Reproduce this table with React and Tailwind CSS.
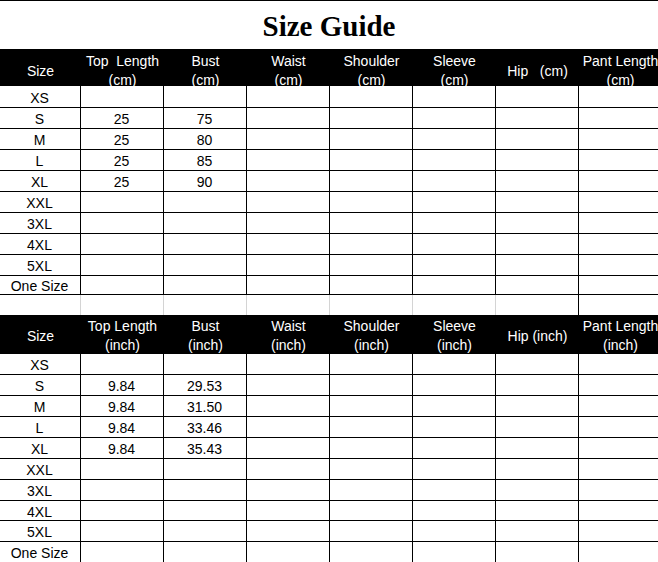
import React from "react";

const COLS = "grid grid-cols-[81px_83px_83px_83px_83px_83px_83px_83px]";

const sizes = ["XS", "S", "M", "L", "XL", "XXL", "3XL", "4XL", "5XL", "One Size"];

const cmData = {
  S: ["25", "75"],
  M: ["25", "80"],
  L: ["25", "85"],
  XL: ["25", "90"],
};
const inchData = {
  S: ["9.84", "29.53"],
  M: ["9.84", "31.50"],
  L: ["9.84", "33.46"],
  XL: ["9.84", "35.43"],
};

const cmHeights = ["h-[22px]", "h-[21px]", "h-[21px]", "h-[21px]", "h-[21px]", "h-[21px]", "h-[21px]", "h-[21px]", "h-[21px]", "h-[19px]"];
const inchHeights = ["h-[21px]", "h-[21px]", "h-[21px]", "h-[21px]", "h-[21px]", "h-[21px]", "h-[21px]", "h-[20px]", "h-[21px]", "h-[21px]"];

function Header({ height, pad, labels }) {
  return (
    <div className={`${COLS} ${height} bg-black text-white text-[14px] leading-[19px]`}>
      {labels.map((l, i) => (
        <div key={i} className={`flex flex-col items-center justify-center text-center whitespace-pre ${pad}`}>
          {l.map((t, j) => (
            <span key={j}>{t}</span>
          ))}
        </div>
      ))}
    </div>
  );
}

function Rows({ data, heights }) {
  return (
    <>
      {sizes.map((s, r) => {
        const d = data[s] || ["", ""];
        const cells = [s, d[0], d[1], "", "", "", "", ""];
        return (
          <div key={s} className={`${COLS} ${heights[r]} border-b border-black text-[14px]`}>
            {cells.map((c, i) => (
              <div key={i} className="flex items-center justify-center border-r border-black leading-none pt-[2px] pr-[1px]">
                {c}
              </div>
            ))}
          </div>
        );
      })}
    </>
  );
}

export default function App() {
  const cmLabels = [
    ["Size"],
    ["Top  Length", "(cm)"],
    ["Bust", "(cm)"],
    ["Waist", "(cm)"],
    ["Shoulder", "(cm)"],
    ["Sleeve", "(cm)"],
    ["Hip   (cm)"],
    ["Pant Length", "(cm)"],
  ];
  const inchLabels = [
    ["Size"],
    ["Top Length", "(inch)"],
    ["Bust", "(inch)"],
    ["Waist", "(inch)"],
    ["Shoulder", "(inch)"],
    ["Sleeve", "(inch)"],
    ["Hip (inch)"],
    ["Pant Length", "(inch)"],
  ];
  return (
    <div className="w-[658px] h-[562px] overflow-hidden bg-white text-black font-['Liberation_Sans',Arial,sans-serif]">
      <div className="h-[49px] border-t border-black flex items-center justify-center pt-[2px]">
        <span className="font-['Liberation_Serif','Times_New_Roman',serif] font-bold text-[29px] leading-none">
          Size Guide
        </span>
      </div>
      <Header height="h-[37px]" pad="pt-[3px]" labels={cmLabels} />
      <Rows data={cmData} heights={cmHeights} />
      <div className={`${COLS} h-[20px]`}>
        {[0, 1, 2, 3, 4, 5, 6].map((i) => (
          <div key={i} className="border-r border-[#d4d4d4]" />
        ))}
        <div className="border-l border-black -ml-px" />
      </div>
      <Header height="h-[39px]" pad="pt-[2px]" labels={inchLabels} />
      <Rows data={inchData} heights={inchHeights} />
    </div>
  );
}
